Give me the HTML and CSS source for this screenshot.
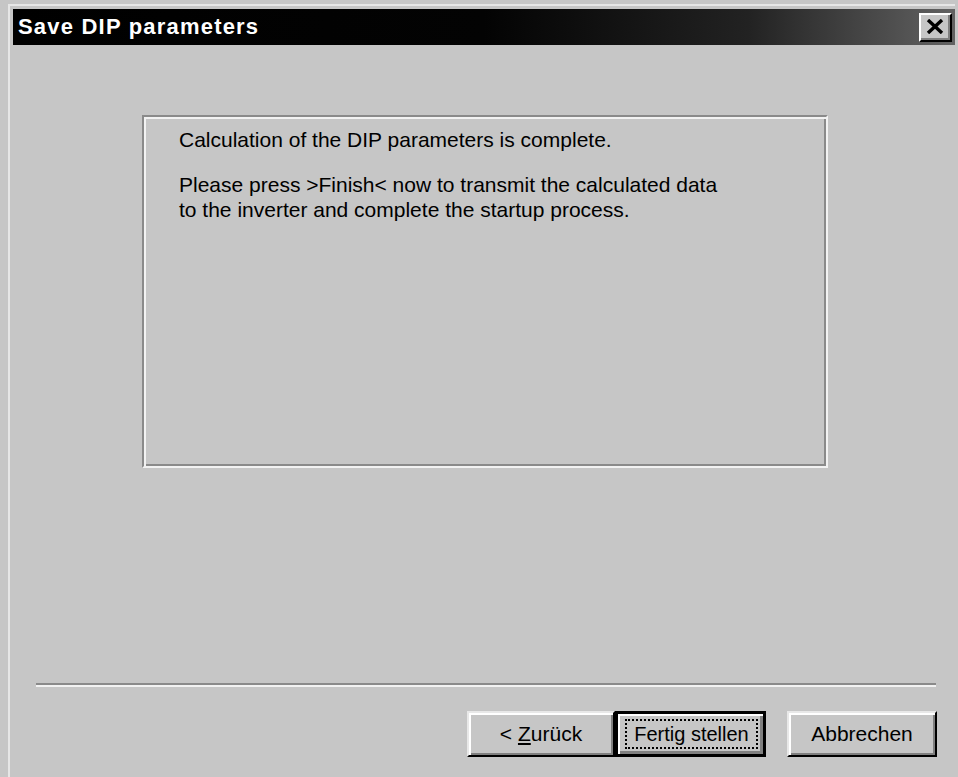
FILE: index.html
```html
<!DOCTYPE html>
<html lang="en">
<head>
<meta charset="utf-8">
<title>Save DIP parameters</title>
<link rel="stylesheet" href="styles.css">
</head>
<body>
<div class="window">
  <div class="titlebar">
    <span class="title">Save DIP parameters</span>
    <button class="close" type="button" aria-label="Close">
      <svg width="18" height="15" viewBox="0 0 18 15">
        <path d="M2 1 L16 14 M16 1 L2 14" stroke="#000" stroke-width="3.4" fill="none"/>
      </svg>
    </button>
  </div>
  <div class="client">
    <div class="panel">
      <p class="msg">Calculation of the DIP parameters is complete.</p>
      <p class="msg">Please press &gt;Finish&lt; now to transmit the calculated data<br>to the inverter and complete the startup process.</p>
    </div>
    <div class="separator"></div>
    <div class="buttons">
      <button class="btn btn-back" type="button">&lt; <u>Z</u>urück</button>
      <button class="btn btn-finish" type="button"><span class="focus">Fertig stellen</span></button>
      <button class="btn btn-cancel" type="button">Abbrechen</button>
    </div>
  </div>
</div>
</body>
</html>
```

FILE: styles.css
```css
html, body {
  margin: 0;
  padding: 0;
  height: 100%;
  overflow: hidden;
  background: #c6c6c6;
}

body {
  font-family: "Liberation Sans", Arial, sans-serif;
  color: #000;
}

/* dialog frame */
.window {
  margin: 4px 3px 0 8px;
  height: calc(100vh - 4px);
  box-sizing: border-box;
  border-top: 2px solid #e6e6e6;
  border-left: 2px solid #e6e6e6;
  padding: 3px 0 0 3px;
  display: flex;
  flex-direction: column;
}

.titlebar {
  height: 36px;
  flex: 0 0 36px;
  display: flex;
  align-items: center;
  justify-content: space-between;
  background: linear-gradient(to right, #000 0%, #030303 50%, #222 78%, #626262 100%);
  padding: 0 3px 0 5px;
}

.title {
  color: #fff;
  font-weight: bold;
  font-size: 22px;
  letter-spacing: 1.2px;
}

.close {
  width: 33px;
  height: 29px;
  padding: 0;
  margin: 0;
  box-sizing: border-box;
  background: #c6c6c6;
  border: 2px solid;
  border-color: #fff #000 #000 #fff;
  box-shadow: inset -2px -2px 0 #808080;
  display: flex;
  align-items: center;
  justify-content: center;
}

.close svg {
  display: block;
  margin: 0 1px 1px 0;
}

.client {
  flex: 1;
  display: flex;
  flex-direction: column;
}

/* etched frame around the message */
.panel {
  margin: 70px 0 0 129px;
  width: 686px;
  height: 353px;
  box-sizing: border-box;
  border: 2px solid;
  border-color: #8a8a8a #f2f2f2 #f2f2f2 #8a8a8a;
  box-shadow: inset 2px 2px 0 #f2f2f2, inset -2px -2px 0 #8a8a8a;
  padding: 10px 0 0 35px;
}

.msg {
  margin: 0 0 20px;
  font-size: 21px;
  line-height: 25px;
}

.separator {
  margin: 215px 19px 0 23px;
  height: 2px;
  background: #8a8a8a;
  border-bottom: 2px solid #f2f2f2;
}

.buttons {
  margin: 24px 18px 0 0;
  display: flex;
  justify-content: flex-end;
}

.btn {
  height: 46px;
  margin: 0;
  padding: 0;
  box-sizing: border-box;
  font-family: "Liberation Sans", Arial, sans-serif;
  font-size: 21px;
  color: #000;
  background: #c6c6c6;
  border: 2px solid;
  border-color: #e8e8e8 #000 #000 #e8e8e8;
  box-shadow: inset 2px 2px 0 #fff, inset -2px -2px 0 #808080;
}

.btn u {
  text-decoration-thickness: 2px;
  text-underline-offset: 2px;
}

.btn-back {
  width: 148px;
}

.btn-finish {
  width: 151px;
  border: 3px solid #000;
  box-shadow: inset 2px 2px 0 #fff, inset -2px -2px 0 #808080, inset -3px -3px 0 #808080;
  padding: 5px 5px 5px 7px;
  display: flex;
}

.btn-finish .focus {
  flex: 1;
  display: flex;
  align-items: center;
  justify-content: center;
  border: 2px dotted #000;
  font-size: 20px;
}

.btn-cancel {
  width: 150px;
  margin-left: 21px;
}
```
